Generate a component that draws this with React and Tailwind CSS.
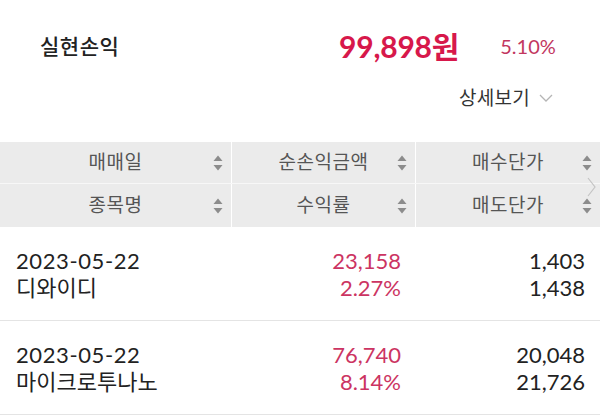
import React from "react";

const rows = [
  { date: "2023-05-22", name: "디와이디", amount: "23,158", rate: "2.27%", buy: "1,403", sell: "1,438" },
  { date: "2023-05-22", name: "마이크로투나노", amount: "76,740", rate: "8.14%", buy: "20,048", sell: "21,726" },
];

function SortIcon() {
  return (
    <svg width="10" height="16" viewBox="0 0 10 16" className="absolute right-[8px] top-1/2 -translate-y-1/2">
      <polygon points="5,0.5 9.5,6 0.5,6" fill="#8c8c8c" />
      <polygon points="0.5,10 9.5,10 5,15.5" fill="#8c8c8c" />
    </svg>
  );
}

function HeadCell({ label, last }) {
  return (
    <div
      className={`relative flex items-center justify-center text-[19px] text-[#555] ${
        last ? "" : "border-r border-white"
      }`}
    >
      <span className="tracking-[0.5px]">{label}</span>
      <SortIcon />
    </div>
  );
}

export default function App() {
  return (
    <div
      className="w-[600px] h-[420px] bg-white overflow-hidden relative"
      style={{ fontFamily: 'Lato, "Noto Sans CJK KR", sans-serif' }}
    >
      {/* summary */}
      <div className="flex items-center h-[94px] pb-[2px]">
        <div className="pl-[40px] text-[21px] font-medium text-[#222] w-[339px] tracking-[0.5px]">실현손익</div>
        <div className="text-[30px] font-bold text-[#d7184b] tracking-[-0.2px]">99,898원</div>
        <div className="ml-[41px] text-[20px] text-[#c2375f]">5.10%</div>
      </div>
      <div className="flex justify-end items-center pr-[47px] -mt-[6px] h-[20px] text-[19px] text-[#333]">
        <span className="tracking-[0.3px]">상세보기</span>
        <svg width="14" height="8" viewBox="0 0 14 8" className="ml-[9px]">
          <polyline points="1,1 7,7 13,1" fill="none" stroke="#b5b5b5" strokeWidth="1.3" />
        </svg>
      </div>

      {/* table header */}
      <div className="mt-[34px] bg-[#ebebeb] relative">
        <div className="grid grid-cols-[232px_184px_1fr] h-[42px] border-b border-[#f7f7f7]">
          <HeadCell label="매매일" />
          <HeadCell label="순손익금액" />
          <HeadCell label="매수단가" last />
        </div>
        <div className="grid grid-cols-[232px_184px_1fr] h-[43px]">
          <HeadCell label="종목명" />
          <HeadCell label="수익률" />
          <HeadCell label="매도단가" last />
        </div>
        <svg width="9" height="20" viewBox="0 0 9 20" className="absolute left-[587px] top-[35px]">
          <polyline points="1,1 8,10 1,19" fill="none" stroke="#c4c4c4" strokeWidth="1.2" />
        </svg>
      </div>

      {/* rows */}
      {rows.map((r, i) => (
        <div
          key={i}
          className="grid grid-cols-[232px_184px_1fr] h-[94px] items-center border-b border-[#e4e4e4] text-[22px] leading-[27px]"
        >
          <div className="pl-[16px] text-[#222]">
            <div className="tracking-[0.6px]">{r.date}</div>
            <div>{r.name}</div>
          </div>
          <div className="text-right pr-[15px] text-[#cc3462]">
            <div>{r.amount}</div>
            <div>{r.rate}</div>
          </div>
          <div className="text-right pr-[15px] text-[#222]">
            <div>{r.buy}</div>
            <div>{r.sell}</div>
          </div>
        </div>
      ))}
    </div>
  );
}
